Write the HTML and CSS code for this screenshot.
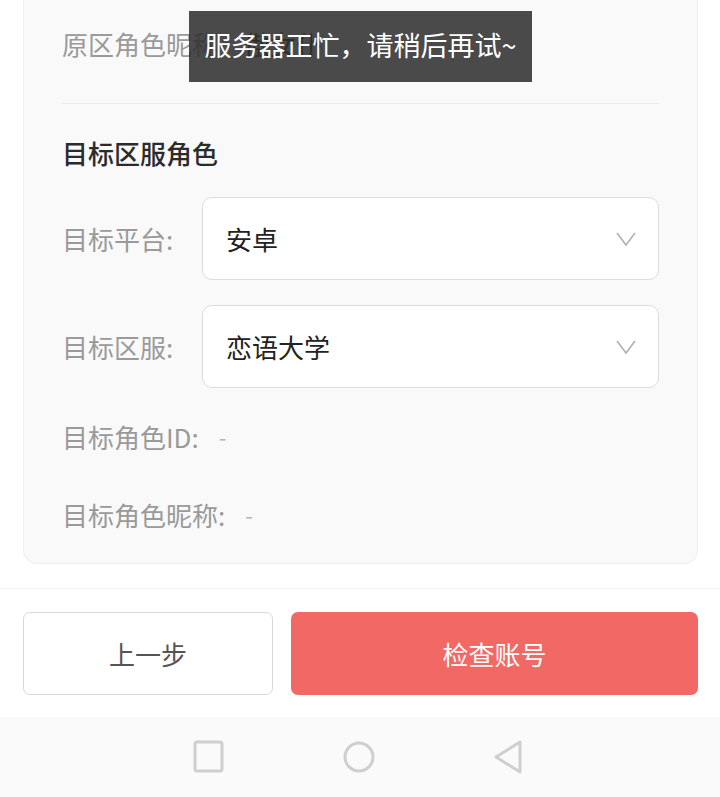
FILE: index.html
```html
<!DOCTYPE html>
<html lang="zh">
<head>
<meta charset="utf-8">
<link rel="stylesheet" href="styles.css">
</head>
<body>
<div class="screen">
  <div class="content">
    <div class="card">
      <div class="row first"><span class="label">原区角色昵称：</span><span class="value">傲女仆</span></div>
      <div class="divider"></div>
      <div class="title">目标区服角色</div>
      <div class="field">
        <span class="label">目标平台:</span>
        <div class="select"><span>安卓</span>
          <svg class="chev" width="20" height="14" viewBox="0 0 20 14"><polyline points="1,1 10,13 19,1" fill="none" stroke="#b0b0b0" stroke-width="1.6"/></svg>
        </div>
      </div>
      <div class="field second">
        <span class="label">目标区服:</span>
        <div class="select"><span>恋语大学</span>
          <svg class="chev" width="20" height="14" viewBox="0 0 20 14"><polyline points="1,1 10,13 19,1" fill="none" stroke="#b0b0b0" stroke-width="1.6"/></svg>
        </div>
      </div>
      <div class="row info"><span class="label">目标角色ID:</span><span class="dash">-</span></div>
      <div class="row info last"><span class="label">目标角色昵称:</span><span class="dash">-</span></div>
    </div>
  </div>
  <div class="footer">
    <button class="btn prev">上一步</button>
    <button class="btn check">检查账号</button>
  </div>
  <div class="navbar">
    <svg width="32" height="34" viewBox="0 0 32 34"><rect x="2" y="2" width="27" height="29" rx="2" fill="none" stroke="#cfcfcf" stroke-width="3"/></svg>
    <svg width="34" height="34" viewBox="0 0 34 34"><circle cx="17" cy="17" r="14" fill="none" stroke="#cfcfcf" stroke-width="3"/></svg>
    <svg width="32" height="36" viewBox="0 0 32 36"><path d="M27 3 L3 18 L27 33 Z" fill="none" stroke="#cfcfcf" stroke-width="3" stroke-linejoin="round"/></svg>
  </div>
  <div class="toast">服务器正忙，请稍后再试~</div>
</div>
</body>
</html>
```
FILE: styles.css
```css
* { box-sizing: border-box; }
html, body { margin: 0; padding: 0; }
body {
  font-family: "Noto Sans CJK SC", "Noto Sans", Roboto, sans-serif;
  background: #ffffff;
}
.screen {
  position: relative;
  width: 720px;
  height: 797px;
  overflow: hidden;
  display: flex;
  flex-direction: column;
}
.content {
  height: 588px;
  padding: 0 22px 0 23px;
}
.card {
  background: #f9f9f9;
  border: 1px solid #efefef;
  border-top: none;
  border-radius: 0 0 14px 14px;
  padding: 0 38px 31px 38px;
}
.label {
  color: #9a9a9a;
  font-size: 26px;
  white-space: nowrap;
}
.row {
  display: flex;
  align-items: center;
  height: 36px;
}
.row.first {
  height: 86px;
  margin-bottom: 17px;
}
.value {
  color: #333;
  font-size: 26px;
}
.divider {
  height: 1px;
  background: #ececec;
}
.title {
  margin-top: 31px;
  height: 36px;
  line-height: 36px;
  font-size: 26px;
  font-weight: 500;
  color: #2b2b2b;
}
.field {
  display: flex;
  align-items: center;
  margin-top: 26px;
}
.field .label {
  width: 140px;
  flex: none;
}
.select {
  flex: 1;
  height: 83px;
  background: #fff;
  border: 1px solid #dcdcdc;
  border-radius: 10px;
  display: flex;
  align-items: center;
  justify-content: space-between;
  padding: 0 22px 0 23px;
  font-size: 26px;
  color: #222;
}
.field.second { margin-top: 25px; }
.chev { display: block; }
.row.info { margin-top: 30px; }
.row.info.last { margin-top: 42px; }
.dash {
  color: #b5b5b5;
  font-size: 22px;
  margin-left: 20px;
}
.footer {
  border-top: 1px solid #f2f2f2;
  padding: 23px 22px 22px 23px;
  display: flex;
  gap: 18px;
  height: 129px;
}
.btn {
  height: 83px;
  font-family: inherit;
  font-size: 26px;
  border-radius: 7px;
  cursor: pointer;
}
.btn.prev {
  width: 250px;
  background: #fff;
  border: 1px solid #d9d9d9;
  color: #555;
}
.btn.check {
  flex: 1;
  background: #f26865;
  border: none;
  color: #fff;
}
.navbar {
  height: 80px;
  background: #fafafa;
  display: flex;
  align-items: center;
  justify-content: center;
  gap: 117px;
  padding-right: 2px;
}
.toast {
  position: absolute;
  left: 189px;
  top: 11px;
  width: 343px;
  height: 71px;
  background: rgba(45, 45, 45, 0.86);
  color: #fff;
  font-size: 27px;
  display: flex;
  align-items: center;
  justify-content: center;
  padding-bottom: 4px;
}
```
